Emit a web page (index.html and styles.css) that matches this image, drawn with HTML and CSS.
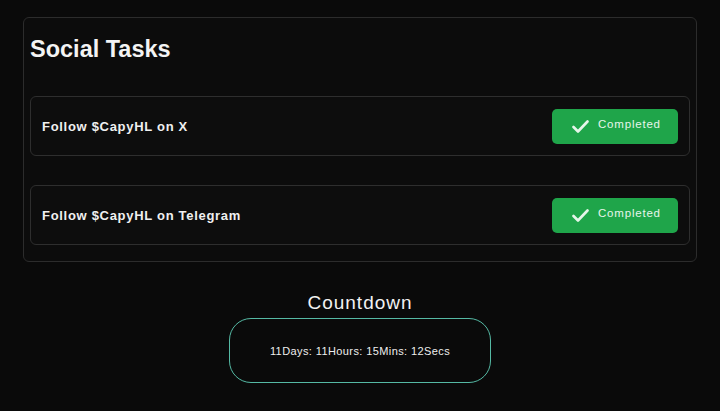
FILE: index.html
```html
<!DOCTYPE html>
<html lang="en">
<head>
  <meta charset="UTF-8">
  <title>Social Tasks</title>
  <link rel="stylesheet" href="styles.css">
</head>

<body>

  <div class="tasks-card">
    <h2>Social Tasks</h2>

    <div class="task-list">
      <div class="task-row">
        <span class="task-name">Follow $CapyHL on X</span>
        <button class="task-btn" type="button">
          <svg class="check" width="17" height="13" viewBox="0 0 17 13">
            <polyline points="1.5,7 6,11.5 15.5,1.5" fill="none" stroke="currentColor" stroke-width="2.6" stroke-linecap="round" stroke-linejoin="round"/>
          </svg>
          <span>Completed</span>
        </button>
      </div>

      <div class="task-row">
        <span class="task-name">Follow $CapyHL on Telegram</span>
        <button class="task-btn" type="button">
          <svg class="check" width="17" height="13" viewBox="0 0 17 13">
            <polyline points="1.5,7 6,11.5 15.5,1.5" fill="none" stroke="currentColor" stroke-width="2.6" stroke-linecap="round" stroke-linejoin="round"/>
          </svg>
          <span>Completed</span>
        </button>
      </div>
    </div>
  </div>

  <div class="countdown">
    <h3>Countdown</h3>
    <div class="countdown-box">11Days: 11Hours: 15Mins: 12Secs</div>
  </div>

</body>
</html>
```

FILE: styles.css
```css
body {
  font-family: 'Liberation Sans', Arial, sans-serif;
  background: #0a0a0a;
  color: #f2f2f2;
  margin: 0;
  padding: 17px 23px 0;
}

.tasks-card {
  background: #0c0c0c;
  border: 1px solid #2c2c2c;
  border-radius: 6px;
  padding: 17px 6px 16px;
}

.tasks-card h2 {
  margin: 0 0 33px;
  font-size: 23.5px;
  line-height: 28px;
  font-weight: bold;
  letter-spacing: 0;
  color: #f4f4f4;
}

.task-list {
  display: flex;
  flex-direction: column;
  gap: 29px;
}

.task-row {
  display: flex;
  align-items: center;
  justify-content: space-between;
  border: 1px solid #2e2e2e;
  border-radius: 6px;
  padding: 11.5px 11px;
  background: #0d0d0d;
}

.task-name {
  font-size: 13px;
  font-weight: bold;
  letter-spacing: 0.7px;
  color: #f0f0f0;
}

.task-btn {
  display: flex;
  align-items: center;
  gap: 9px;
  width: 126px;
  height: 35px;
  padding: 0 0 0 20px;
  background: #1fa54a;
  border: none;
  border-radius: 5px;
  color: #e6f5ea;
  font-family: inherit;
  font-size: 11.5px;
  letter-spacing: 0.8px;
  cursor: pointer;
}

.task-btn span {
  margin-top: -5px;
}

.check {
  display: block;
}

.countdown {
  display: flex;
  flex-direction: column;
  align-items: center;
  margin-top: 30px;
}

.countdown h3 {
  margin: 0 0 4px;
  font-size: 19px;
  line-height: 22px;
  font-weight: normal;
  letter-spacing: 1px;
  color: #f2f2f2;
}

.countdown-box {
  display: flex;
  align-items: center;
  justify-content: center;
  width: 260px;
  height: 63px;
  border: 1px solid #55b9a4;
  border-radius: 22px;
  font-size: 11px;
  letter-spacing: 0.4px;
  color: #eeeeee;
}
```
